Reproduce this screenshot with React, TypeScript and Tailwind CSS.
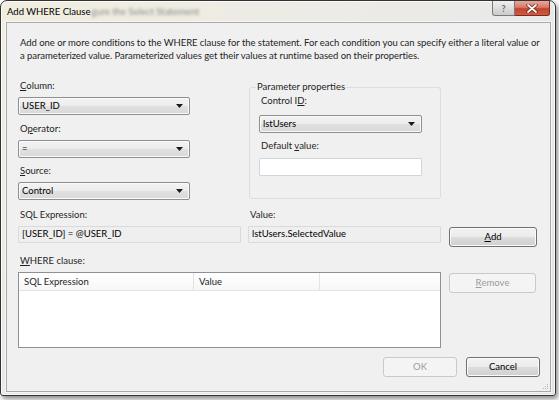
import React from "react";

const ui = "font-['Lato','Open_Sans',sans-serif]";

function Key({ children }: { children: React.ReactNode }) {
  return <span className="underline underline-offset-[1px] decoration-[0.5px]">{children}</span>;
}

function Label({ children, className = "" }: { children: React.ReactNode; className?: string }) {
  return <div className={`h-[14px] leading-[14px] text-[9.5px] text-[#1e1e1e] ${className}`}>{children}</div>;
}

function Combo({ value, className = "" }: { value: string; className?: string }) {
  return (
    <div
      className={`flex h-[18px] items-center justify-between rounded-[2px] border border-[#8e8f8f] bg-[linear-gradient(#f3f3f3_0%,#ececec_50%,#e0e0e0_51%,#d9d9d9_100%)] pl-[3px] pr-[6px] text-[9.5px] text-black shadow-[inset_0_0_0_1px_#fafafa] ${className}`}
    >
      <span className="leading-[14px]">{value}</span>
      <svg width="7" height="4" viewBox="0 0 7 4">
        <path d="M0 0h7L3.5 4z" fill="#1b1b1b" />
      </svg>
    </div>
  );
}

function Button({
  children,
  disabled,
  className = "",
}: {
  children: React.ReactNode;
  disabled?: boolean;
  className?: string;
}) {
  return (
    <div
      className={`flex h-[20px] items-center justify-center rounded-[3px] border text-[9.5px] ${
        disabled
          ? "border-[#c9c9c9] bg-[#f4f4f4] text-[#9c9c9c]"
          : "border-[#707070] bg-[linear-gradient(#f2f2f2_0%,#ebebeb_50%,#dddddd_51%,#cfcfcf_100%)] text-black shadow-[inset_0_0_0_1px_#fbfbfb]"
      } ${className}`}
    >
      {children}
    </div>
  );
}

function TitleButtons() {
  return (
    <div className="ml-auto mr-[5px] flex self-start">
      <div className="flex h-[15px] w-[23px] items-center justify-center rounded-bl-[3px] border border-t-0 border-[#7a7a7a] bg-linear-to-b from-[#f0f0f0] to-[#cbcbcb] text-[9px] font-bold leading-none text-[#6b6b6b]">
        ?
      </div>
      <div className="flex h-[15px] w-[35px] items-center justify-center rounded-br-[3px] border border-l-0 border-t-0 border-[#7a2a20] bg-[linear-gradient(#e8a89c_0%,#d77a69_45%,#c4432e_55%,#d05a42_100%)]">
        <svg width="12" height="9" viewBox="0 0 12 9">
          <path d="M2 1l8 7M10 1L2 8" stroke="#5a1c12" strokeWidth="3.2" strokeLinecap="round" />
          <path d="M2 1l8 7M10 1L2 8" stroke="#ffffff" strokeWidth="1.8" strokeLinecap="round" />
        </svg>
      </div>
    </div>
  );
}

export default function App() {
  return (
    <div className={`h-[400px] w-[559px] bg-white ${ui}`}>
      <div className="flex h-[396px] w-[556px] flex-col rounded-t-[7px] rounded-b-[3px] border border-[#333333] bg-linear-to-br from-[#f1eedf] via-[#e9e9e9] to-[#e2e2e2] shadow-[2px_3px_5px_rgba(0,0,0,0.45),inset_0_0_0_1px_rgba(255,255,255,0.75)]">
        {/* title bar */}
        <div className="flex h-[21px] items-center pl-[6px]">
          <span className="text-[9.5px] leading-none text-black">Add WHERE Clause</span>
          <span className="ml-[1px] text-[9.5px] leading-none text-[#5a5a5a] opacity-70 blur-[1.4px]">
            gure the Select Statement
          </span>
          <TitleButtons />
        </div>

        {/* client area */}
        <div className="relative mx-[5px] h-[370px] w-[545px] border border-[#a9a9a9] bg-[#f0f0f0] pl-[11px] pr-[10px] shadow-[0_0_0_1px_rgba(255,255,255,0.6)]">
          <p className="-mr-[2px] pl-[2px] pt-[13px] text-[9.5px] leading-[13px] tracking-[-0.05px] text-[#1e1e1e]">
            Add one or more conditions to the WHERE clause for the statement. For each condition you can specify either a literal value or a
            parameterized value. Parameterized values get their values at runtime based on their properties.
          </p>

          {/* column / operator / source + parameter properties */}
          <div className="mt-[17px] flex items-start">
            <div className="w-[172px]">
              <Label className="pl-[2px]">
                <Key>C</Key>olumn:
              </Label>
              <Combo value="USER_ID" className="mt-[4px]" />
              <Label className="mt-[7px] pl-[2px]">
                O<Key>p</Key>erator:
              </Label>
              <Combo value="=" className="mt-[4px]" />
              <Label className="mt-[6px] pl-[2px]">
                <Key>S</Key>ource:
              </Label>
              <Combo value="Control" className="mt-[4px]" />
            </div>

            <fieldset className="ml-[59px] mt-[1px] w-[192px] rounded-[3px] border border-[#d5dfe5] pb-[22px] pl-[9px] pr-[18px]">
              <legend className="-ml-[3px] px-[1px] text-[9.5px] leading-[14px] text-[#1e1e1e]">Parameter properties</legend>
              <Label className="pl-[2px]">
                Control I<Key>D</Key>:
              </Label>
              <Combo value="lstUsers" className="mt-[7px] w-[163px]" />
              <Label className="mt-[6px] pl-[2px]">
                Default <Key>v</Key>alue:
              </Label>
              <div className="mt-[5px] h-[18px] w-[163px] rounded-[1px] border border-[#cfd6dd] bg-white" />
            </fieldset>
          </div>

          {/* expression row */}
          <div className="mt-[8px] flex items-start">
            <div className="w-[223px]">
              <Label className="pl-[2px]">SQL Expression:</Label>
              <div className="mt-[4px] flex h-[17px] items-center rounded-[1px] border border-[#dadada] bg-[#efefef] pl-[3px] text-[9.5px] text-black">
                [USER_ID] = @USER_ID
              </div>
            </div>
            <div className="ml-[7px] w-[193px]">
              <Label className="pl-[2px]">Value:</Label>
              <div className="mt-[4px] flex h-[17px] items-center rounded-[1px] border border-[#dadada] bg-[#efefef] pl-[3px] text-[9.5px] text-black">
                lstUsers.SelectedValue
              </div>
            </div>
            <Button className="ml-[8px] mt-[19px] w-[88px]">
              <Key>A</Key>dd
            </Button>
          </div>

          <Label className="mt-[7px] pl-[2px]">
            <Key>W</Key>HERE clause:
          </Label>

          {/* list + remove */}
          <div className="mt-[4px] flex items-start">
            <div className="h-[76px] w-[423px] border border-[#8d9196] bg-white">
              <div className="flex h-[18px] border-b border-[#e3e3e3] bg-linear-to-b from-white to-[#f7f7f7] text-[9.5px] leading-[18px] text-[#1e1e1e]">
                <div className="w-[175px] border-r border-[#e3e3e3] pl-[5px]">SQL Expression</div>
                <div className="w-[126px] border-r border-[#e3e3e3] pl-[5px]">Value</div>
              </div>
            </div>
            <Button disabled className="ml-[8px] mt-[1px] w-[87px]">
              <Key>R</Key>emove
            </Button>
          </div>

          {/* footer */}
          <div className="mt-[9px] flex justify-end gap-[9px]">
            <Button disabled className="w-[74px]">
              OK
            </Button>
            <Button className="w-[74px]">Cancel</Button>
          </div>

          <svg className="absolute bottom-[1px] right-[1px]" width="7" height="7" viewBox="0 0 7 7">
            <g fill="#b5b5b5">
              <rect x="5" y="1" width="1" height="1" />
              <rect x="3" y="3" width="1" height="1" />
              <rect x="5" y="3" width="1" height="1" />
              <rect x="1" y="5" width="1" height="1" />
              <rect x="3" y="5" width="1" height="1" />
              <rect x="5" y="5" width="1" height="1" />
            </g>
          </svg>
        </div>
      </div>
    </div>
  );
}
